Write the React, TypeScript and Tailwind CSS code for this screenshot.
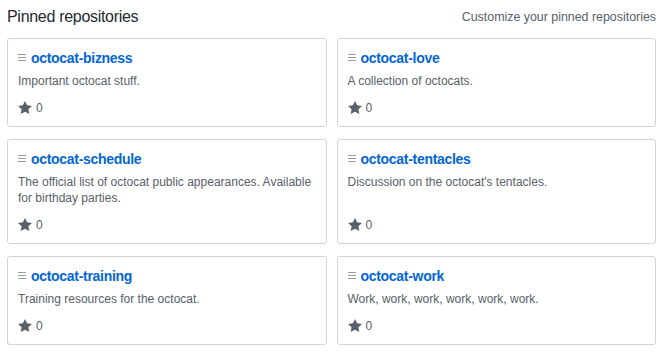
import React from 'react';

type Repo = {
  name: string;
  description: string;
  stars: number;
};

const repos: Repo[] = [
  { name: 'octocat-bizness', description: 'Important octocat stuff.', stars: 0 },
  { name: 'octocat-love', description: 'A collection of octocats.', stars: 0 },
  {
    name: 'octocat-schedule',
    description: 'The official list of octocat public appearances. Available for birthday parties.',
    stars: 0,
  },
  { name: 'octocat-tentacles', description: "Discussion on the octocat's tentacles.", stars: 0 },
  { name: 'octocat-training', description: 'Training resources for the octocat.', stars: 0 },
  { name: 'octocat-work', description: 'Work, work, work, work, work, work.', stars: 0 },
];

const Grabber = () => (
  <svg width="8" height="16" viewBox="0 0 8 16" className="shrink-0 fill-[#959da5]">
    <path d="M8 4v1H0V4h8zM0 8h8V7H0v1zm0 3h8v-1H0v1z" />
  </svg>
);

const Star = () => (
  <svg width="14" height="16" viewBox="0 0 14 16" className="fill-[#586069]">
    <path d="M14 6l-4.9-.64L7 1 4.9 5.36 0 6l3.6 3.26L2.67 14 7 11.67 11.33 14l-.93-4.74L14 6z" />
  </svg>
);

const PinnedCard = ({ repo }: { repo: Repo }) => (
  <div className="flex flex-col border border-[#d1d5da] rounded-[3px] bg-white px-[10px] pt-[9px] pb-[10px]">
    <div className="flex items-center gap-[5px] h-[20px]">
      <Grabber />
      <a href="#" className="text-[14px] font-bold tracking-[-0.3px] text-[#0366d6] leading-[20px]">
        {repo.name}
      </a>
    </div>
    <p className="mt-[5px] mb-[11px] text-[12px] leading-[16px] text-[#586069]">{repo.description}</p>
    <div className="mt-auto flex items-center gap-[4px] h-[16px] text-[12px] text-[#586069]">
      <Star />
      <span>{repo.stars}</span>
    </div>
  </div>
);

export default function App() {
  return (
    <div className="w-[670px] h-[357px] bg-white font-['Liberation_Sans',Arial,sans-serif] text-[#24292e] pl-[7px] pr-[14px]">
      <div className="flex items-end justify-between h-[27px]">
        <h2 className="text-[16px] tracking-[-0.3px] leading-[20px] font-normal">Pinned repositories</h2>
        <a href="#" className="text-[12.4px] leading-[20px] text-[#586069]">
          Customize your pinned repositories
        </a>
      </div>
      <div className="mt-[11px] grid grid-cols-2 gap-x-[10px] gap-y-[12px]">
        {repos.map((repo) => (
          <PinnedCard key={repo.name} repo={repo} />
        ))}
      </div>
    </div>
  );
}
